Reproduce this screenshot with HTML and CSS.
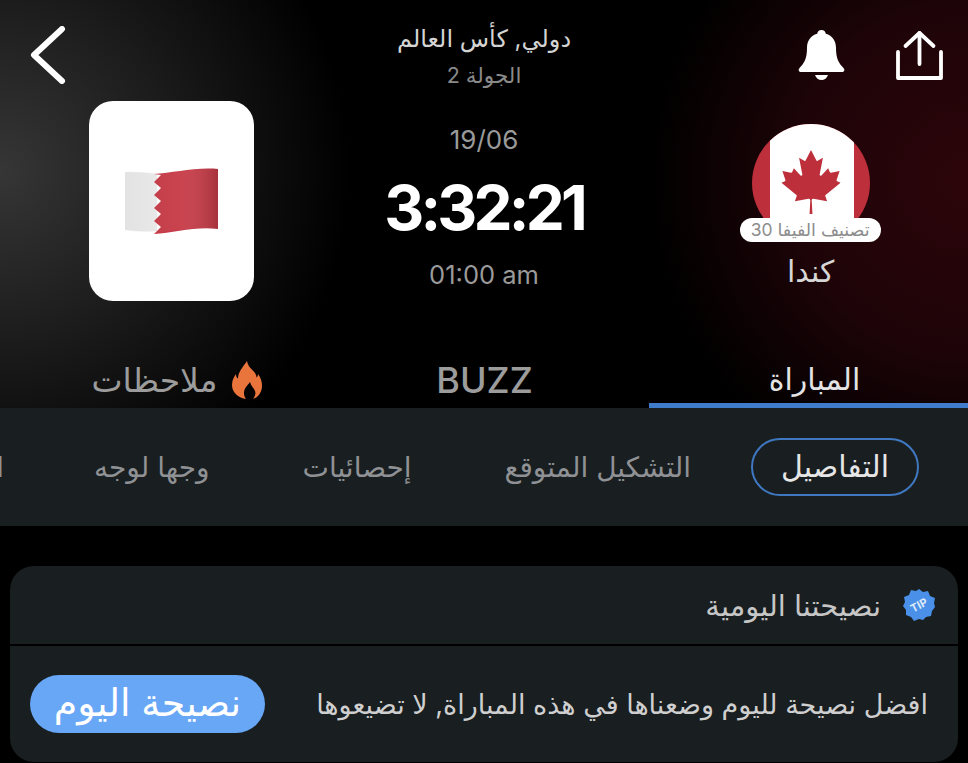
FILE: index.html
```html
<!DOCTYPE html>
<html lang="ar" dir="rtl">

<head>
  <meta charset="utf-8">
  <title>كندا - البحرين</title>
  <link rel="stylesheet" href="styles.css">
</head>

<body>
  <header class="matchHeader">
    <div class="matchGrid">

      <div class="sideCol sideHome">
        <div class="actions">
          <svg class="iconShare" viewBox="0 0 47 50" fill="none" stroke="#fff" stroke-width="3.8" stroke-linecap="round" stroke-linejoin="round">
            <path d="M2 22v26h43V22" />
            <path d="M23.500 34V3" />
            <path d="M9.500 16 23.500 3l14 13" />
          </svg>
          <svg class="iconBell" viewBox="0 0 47 50" fill="#fff">
            <path d="M23.500 0c2.500 0 4 1.600 4.300 3.700C34.500 5.500 38 11 38 18c0 10 2.500 15 7.500 20 1.500 1.600 1 4-1.500 4H3c-2.500 0-3-2.400-1.500-4C6.500 33 9 28 9 18 9 11 12.500 5.500 19.200 3.700 19.500 1.600 21 0 23.500 0z" />
            <path d="M17 45h13c-1 3-3.500 5-6.500 5S18 48 17 45z" />
          </svg>
        </div>
        <div class="teamHome">
          <div class="crest">
            <svg class="crestFlag" viewBox="0 0 118 118">
              <rect width="118" height="118" fill="#bd2f3b" />
              <rect x="18" width="84" height="118" fill="#fff" />
              <svg x="27" y="23" width="64" height="70" viewBox="-2015 -2000 4030 4030">
                <path fill="#bd2f3b" d="m-90 2030 45-863a95 95 0 0 0-111-98l-859 151 116-320a65 65 0 0 0-20-73l-941-762 212-99a65 65 0 0 0 34-79l-186-572 542 115a65 65 0 0 0 73-38l105-247 423 454a65 65 0 0 0 111-57l-204-1052 327 189a65 65 0 0 0 91-27l332-652 332 652a65 65 0 0 0 91 27l327-189-204 1052a65 65 0 0 0 111 57l423-454 105 247a65 65 0 0 0 73 38l542-115-186 572a65 65 0 0 0 34 79l212 99-941 762a65 65 0 0 0-20 73l116 320-859-151a95 95 0 0 0-111 98l45 863z" />
              </svg>
            </svg>
            <span class="rankPill">تصنيف الفيفا 30</span>
          </div>
          <div class="teamName">كندا</div>
        </div>
      </div>

      <div class="centerCol">
        <div class="league">دولي, كأس العالم</div>
        <div class="round">الجولة 2</div>
        <div class="matchDate" dir="ltr">19/06</div>
        <div class="countdown" dir="ltr">3:32:21</div>
        <div class="matchTime" dir="ltr">01:00 am</div>
      </div>

      <div class="sideCol sideAway">
        <svg class="iconBack" viewBox="0 0 36 58" fill="none" stroke="#fff" stroke-width="6" stroke-linecap="round" stroke-linejoin="round">
          <path d="M32 3 4 29l28 26" />
        </svg>
        <div class="flagCard">
          <svg class="flagBh" viewBox="0 0 94 68">
            <defs>
              <linearGradient id="flagShade" x1="0" x2="1" y1="0" y2="0">
                <stop offset="0" stop-color="#000" stop-opacity="0.04" />
                <stop offset="0.6" stop-color="#fff" stop-opacity="0.04" />
                <stop offset="1" stop-color="#000" stop-opacity="0.16" />
              </linearGradient>
            </defs>
            <path fill="#ececec" d="M0 5c12-1 22 1 32 2v57C22 65 10 64 0 63z" />
            <path fill="#c73c48" d="M29 7C48 6 70 0 93 2v60c-22-3-44 4-64 5l7-7-7-6 7-7-7-6 7-7-7-6 7-7-7-6 7-7z" />
            <path fill="url(#flagShade)" d="M0 5C30 8 60 0 93 2v60C63 58 30 70 0 63z" />
          </svg>
        </div>
      </div>

    </div>

    <nav class="mainTabs">
      <div class="mainTab mainTabActive">المباراة</div>
      <div class="mainTab buzz">BUZZ</div>
      <div class="mainTab notes">
        <svg class="iconFire" viewBox="0 0 30 38">
          <path fill="#e9743c" d="M15 0c1 6 5 8 8 12 1 1.500 1.500 3 1.500 4.500 1-1 1.500-2 1.500-3.500 3 4 4 8 4 12 0 7-5 12-9 13 2-3 3-5 2-8-1-3-4-5-5-9-2 3-6 6-6 11 0 2 .5 4 2 6C8 37 0 33 0 24c0-5 2-8 4-11 0 2 .5 3.500 2 4.500C6 11 11 6 15 0z" />
        </svg>
        <span>ملاحظات</span>
      </div>
    </nav>
  </header>

  <div class="subTabs">
    <div class="subTab subTabActive">التفاصيل</div>
    <div class="subTab">التشكيل المتوقع</div>
    <div class="subTab">إحصائيات</div>
    <div class="subTab">وجها لوجه</div>
    <div class="subTab subTabLast">الترتيب</div>
  </div>

  <section class="tipCard">
    <div class="tipHead">
      <svg class="tipBadge" viewBox="0 0 32 32">
        <path fill="#4a8fe8" d="M16 0l4 3 5-1 2 5 5 2-1 5 1 4-3 4-1 5-5 1-3 3-4-1-5 2-3-4-5-2 0-5-3-4 2-4-1-5 5-2 2-5 5 1z" />
        <text class="tipBadgeText" x="16" y="20" text-anchor="middle" transform="rotate(-28 16 16)">TIP</text>
      </svg>
      <span class="tipTitle">نصيحتنا اليومية</span>
    </div>
    <div class="tipBody">
      <span class="tipText">افضل نصيحة لليوم وضعناها في هذه المباراة, لا تضيعوها</span>
      <a class="tipButton">نصيحة اليوم</a>
    </div>
  </section>
</body>

</html>
```

FILE: styles.css
```css
body {
  font-family: Inter, "DejaVu Sans", sans-serif;
  background-color: #000;
  color: #fff;
  margin: 0;
  height: 763px;
  overflow: hidden;
}

.matchHeader {
  height: 408px;
  display: flex;
  flex-direction: column;
  background:
    radial-gradient(circle at 0 170px, #363636 0, #1c1c1c 170px, rgba(0, 0, 0, 0) 350px),
    radial-gradient(circle at 968px 180px, #2c050a 0, #1e0408 170px, rgba(0, 0, 0, 0) 320px),
    #000;
}

.matchGrid {
  flex: 1;
  display: grid;
  grid-template-columns: 1fr 1fr 1fr;
}

.sideCol {
  display: flex;
  flex-direction: column;
}

.sideAway {
  align-items: flex-end;
}

/* bell + share */
.actions {
  display: flex;
  gap: 51px;
  padding: 30px 25px 0 0;
}

.iconShare,
.iconBell {
  width: 47px;
  height: 50px;
}

.teamHome {
  display: flex;
  flex-direction: column;
  align-items: center;
  margin-top: 44px;
  padding-left: 8px;
}

.crest {
  position: relative;
  width: 118px;
  height: 118px;
}

.crestFlag {
  display: block;
  width: 118px;
  height: 118px;
  border-radius: 50%;
}

.rankPill {
  position: absolute;
  top: 94px;
  left: -12px;
  width: 141px;
  height: 24px;
  line-height: 24px;
  border-radius: 12px;
  background: #fff;
  color: #8c8c8c;
  font-size: 17.500px;
  text-align: center;
  white-space: nowrap;
}

.teamName {
  margin-top: 14px;
  font-size: 30px;
  line-height: 30px;
  color: #d6d6d6;
}

.centerCol {
  text-align: center;
  padding-top: 24px;
}

.league {
  font-size: 24px;
  line-height: 30px;
  color: #d4d4d4;
}

.round {
  font-size: 21.500px;
  line-height: 28px;
  margin-top: 7px;
  color: #8a8a8a;
}

.matchDate {
  font-size: 26px;
  line-height: 32px;
  margin-top: 35px;
  color: #9a9a9a;
}

.countdown {
  font-size: 62px;
  line-height: 70px;
  font-weight: 700;
  margin-top: 17px;
  letter-spacing: -3.800px;
}

.matchTime {
  font-size: 25.500px;
  line-height: 32px;
  margin-top: 16px;
  color: #9a9a9a;
}

.iconBack {
  width: 36px;
  height: 58px;
  margin: 26px 0 0 30px;
}

.flagCard {
  width: 165px;
  height: 200px;
  margin: 17px 0 0 89px;
  border-radius: 24px;
  background: #fff;
  display: flex;
  align-items: center;
  justify-content: center;
}

.flagBh {
  width: 94px;
  height: 68px;
}

.mainTabs {
  display: grid;
  grid-template-columns: 319px 325px 324px;
  height: 54px;
}

.mainTab {
  display: flex;
  align-items: center;
  justify-content: center;
  gap: 15px;
  font-size: 33px;
  color: #9c9c9c;
  padding-bottom: 3px;
  box-sizing: border-box;
}

.mainTabActive {
  color: #e4e4e4;
  border-bottom: 5px solid #3f7ccc;
  padding: 0 0 0 12px;
  font-size: 30px;
}

.buzz {
  font-size: 36px;
  font-weight: 500;
  padding-right: 4px;
}

.notes {
  padding-left: 30px;
}

.iconFire {
  width: 30px;
  height: 38px;
}

.subTabs {
  height: 118px;
  background: #191e21;
  display: flex;
  align-items: center;
  overflow: hidden;
  padding-right: 49px;
  gap: 93px;
  white-space: nowrap;
}

.subTab {
  font-size: 28px;
  color: #8f9194;
  flex: none;
}

.subTabActive {
  width: 164px;
  height: 54px;
  line-height: 52px;
  text-align: center;
  border: 2.500px solid #3f78c0;
  border-radius: 29px;
  color: #e6e6e6;
  font-size: 30px;
  margin-left: -33px;
}

.subTabLast {
  margin-right: -3px;
}

.tipCard {
  margin: 40px 10px 0;
  height: 196px;
  border-radius: 24px;
  background: #191e21;
  display: flex;
  flex-direction: column;
}

.tipHead {
  height: 80px;
  box-sizing: border-box;
  border-bottom: 2px solid #000;
  display: flex;
  align-items: center;
  gap: 22px;
  padding-right: 23px;
}

.tipBadge {
  width: 32px;
  height: 32px;
}

.tipBadgeText {
  font-size: 11px;
  font-weight: 700;
  fill: #dfeaf8;
}

.tipTitle {
  font-size: 29px;
  color: #c6c6c6;
}

.tipBody {
  flex: 1;
  display: flex;
  align-items: center;
  justify-content: space-between;
  padding: 0 30px 0 20px;
}

.tipText {
  font-size: 27px;
  color: #cfcfcf;
  white-space: nowrap;
}

.tipButton {
  width: 235px;
  height: 58px;
  line-height: 54px;
  text-align: center;
  border-radius: 29px;
  background: #68a6f6;
  color: #fff;
  font-size: 38px;
}
```
